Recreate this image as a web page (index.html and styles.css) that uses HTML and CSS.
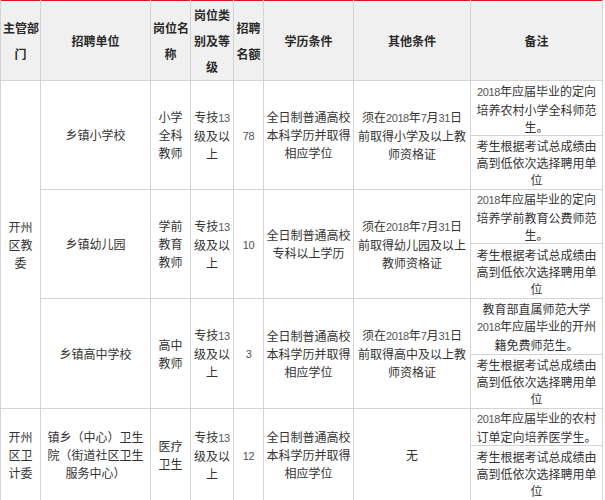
FILE: index.html
```html
<!DOCTYPE html>
<html lang="zh-CN">
<head>
<meta charset="utf-8">
<title>招聘计划</title>
<link rel="stylesheet" href="styles.css">
</head>
<body>
<table class="plan">
  <colgroup>
    <col class="c1"><col class="c2"><col class="c3"><col class="c4"><col class="c5"><col class="c6"><col class="c7"><col class="c8">
  </colgroup>
  <thead>
    <tr class="h">
      <th>主管部<br>门</th>
      <th>招聘单位</th>
      <th>岗位名<br>称</th>
      <th>岗位类<br>别及等<br>级</th>
      <th>招聘<br>名额</th>
      <th>学历条件</th>
      <th>其他条件</th>
      <th>备注</th>
    </tr>
  </thead>
  <tbody>
    <tr class="r1a">
      <td rowspan="6">开州<br>区教<br>委</td>
      <td rowspan="2">乡镇小学校</td>
      <td rowspan="2">小学<br>全科<br>教师</td>
      <td rowspan="2">专技<span class="n">13</span><br>级及以<br>上</td>
      <td rowspan="2"><span class="n">78</span></td>
      <td rowspan="2">全日制普通高校<br>本科学历并取得<br>相应学位</td>
      <td rowspan="2">须在<span class="n">2018</span>年<span class="n">7</span>月<span class="n">31</span>日<br>前取得小学及以上教<br>师资格证</td>
      <td><span class="n">2018</span>年应届毕业的定向<br>培养农村小学全科师范<br>生。</td>
    </tr>
    <tr class="r1b">
      <td>考生根据考试总成绩由<br>高到低依次选择聘用单<br>位</td>
    </tr>
    <tr class="r2a">
      <td rowspan="2">乡镇幼儿园</td>
      <td rowspan="2">学前<br>教育<br>教师</td>
      <td rowspan="2">专技<span class="n">13</span><br>级及以<br>上</td>
      <td rowspan="2"><span class="n">10</span></td>
      <td rowspan="2">全日制普通高校<br>专科以上学历</td>
      <td rowspan="2">须在<span class="n">2018</span>年<span class="n">7</span>月<span class="n">31</span>日<br>前取得幼儿园及以上<br>教师资格证</td>
      <td><span class="n">2018</span>年应届毕业的定向<br>培养学前教育公费师范<br>生。</td>
    </tr>
    <tr class="r2b">
      <td>考生根据考试总成绩由<br>高到低依次选择聘用单<br>位</td>
    </tr>
    <tr class="r3a">
      <td rowspan="2">乡镇高中学校</td>
      <td rowspan="2">高中<br>教师</td>
      <td rowspan="2">专技<span class="n">13</span><br>级及以<br>上</td>
      <td rowspan="2"><span class="n">3</span></td>
      <td rowspan="2">全日制普通高校<br>本科学历并取得<br>相应学位</td>
      <td rowspan="2">须在<span class="n">2018</span>年<span class="n">7</span>月<span class="n">31</span>日<br>前取得高中及以上教<br>师资格证</td>
      <td>教育部直属师范大学<br><span class="n">2018</span>年应届毕业的开州<br>籍免费师范生。</td>
    </tr>
    <tr class="r3b">
      <td>考生根据考试总成绩由<br>高到低依次选择聘用单<br>位</td>
    </tr>
    <tr class="r4a">
      <td rowspan="2">开州<br>区卫<br>计委</td>
      <td rowspan="2">镇乡（中心）卫生<br>院（街道社区卫生<br>服务中心）</td>
      <td rowspan="2">医疗<br>卫生</td>
      <td rowspan="2">专技<span class="n">13</span><br>级及以<br>上</td>
      <td rowspan="2"><span class="n">12</span></td>
      <td rowspan="2">全日制普通高校<br>本科学历并取得<br>相应学位</td>
      <td rowspan="2">无</td>
      <td><span class="n">2018</span>年应届毕业的农村<br>订单定向培养医学生。</td>
    </tr>
    <tr class="r4b">
      <td>考生根据考试总成绩由<br>高到低依次选择聘用单<br>位</td>
    </tr>
  </tbody>
</table>
</body>
</html>
```
FILE: styles.css
```css
html, body {
  margin: 0;
  padding: 0;
  background: #ffffff;
}

.plan {
  border-collapse: collapse;
  table-layout: fixed;
  width: 602px;
  border-top: 1px solid #e8141c;
  font-family: "Noto Sans CJK SC", "Noto Sans", sans-serif;
  font-size: 12px;
  color: #333333;
}

.c1 { width: 40px; }
.c2 { width: 110px; }
.c3 { width: 40px; }
.c4 { width: 43px; }
.c5 { width: 30px; }
.c6 { width: 90px; }
.c7 { width: 117px; }
.c8 { width: 132px; }

.plan th,
.plan td {
  border: 1px solid #d4d4d4;
  padding: 0 2px;
  text-align: center;
  vertical-align: middle;
  white-space: nowrap;
  overflow: hidden;
}

.plan thead th {
  border-top: 0;
}

.plan th {
  background: #f0f0f0;
  font-weight: bold;
  line-height: 26px;
  color: #2a2a2a;
}

.plan td {
  line-height: 18px;
  font-weight: normal;
}

.plan td:last-child {
  line-height: 17px;
}

.n {
  font-family: "Liberation Sans", Arial, sans-serif;
  font-size: 11px;
  letter-spacing: -0.4px;
  color: #555555;
}

.h { height: 80px; }
.r1a { height: 55px; }
.r1b { height: 54px; }
.r2a { height: 53px; }
.r2b { height: 55px; }
.r3a { height: 56px; }
.r3b { height: 54px; }
.r4a { height: 35px; }
.r4b { height: 56px; }
```
